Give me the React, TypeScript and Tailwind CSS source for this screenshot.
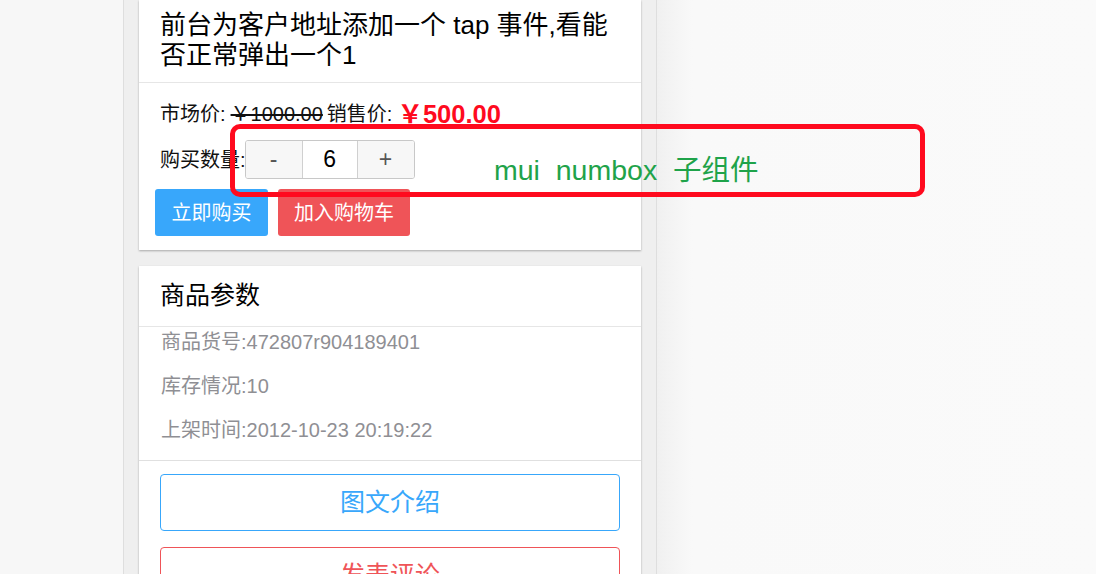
import React from "react";

const font = { fontFamily: '"Liberation Sans", "Noto Sans CJK SC", sans-serif' };

export default function App() {
  return (
    <div className="relative flex h-[574px] w-[1096px] overflow-hidden bg-[#fafafa]" style={font}>
      <div className="w-[123px] shrink-0 bg-[#f7f7f7]" />
      <div className="flex w-[534px] shrink-0 flex-col gap-[16px] border-x border-[#dedede] bg-[#efefef] px-[15px]">
        {/* card 1 */}
        <div className="bg-white shadow-[0_1px_2px_rgba(0,0,0,0.3)]">
          <div className="border-b border-[#e6e6e6] px-[21px] pb-[12px] pt-[10px] text-[26px] leading-[30px] text-black">
            前台为客户地址添加一个 tap 事件,看能
            <br />
            否正常弹出一个1
          </div>
          <div className="px-[16px] pb-[14px] pt-[16px]">
            <div className="flex h-[30px] items-center pl-[5px] text-[20px] text-[#111]">
              <span>市场价:</span>
              <span className="ml-[5px] line-through">￥1000.00</span>
              <span className="ml-[4px]">销售价:</span>
              <span className="ml-[5px] text-[25.5px] font-bold text-[#ff0a1e]">￥500.00</span>
            </div>
            <div className="mt-[11px] flex items-center pl-[5px] text-[20px] text-[#111]">
              <span>购买数量:</span>
              <div className="-ml-[1px] flex h-[39px] w-[170px] overflow-hidden rounded-[3px] border border-[#c8c8c8]">
                <div className="flex w-[57px] items-center justify-center border-r border-[#d0d0d0] bg-[#f7f7f7] text-[23px] text-[#555]">-</div>
                <div className="flex w-[54px] items-center justify-center bg-white text-[23px] text-black">6</div>
                <div className="flex w-[57px] items-center justify-center border-l border-[#d0d0d0] bg-[#f7f7f7] text-[23px] text-[#555]">+</div>
              </div>
            </div>
            <div className="mt-[10px] flex gap-[10px]">
              <div className="flex h-[47px] w-[113px] items-center justify-center rounded-[3px] bg-[#38a7fb] text-[20px] text-white">立即购买</div>
              <div className="flex h-[47px] w-[132px] items-center justify-center rounded-[3px] bg-[#ef5458] text-[20px] text-white">加入购物车</div>
            </div>
          </div>
        </div>
        {/* card 2 */}
        <div className="bg-white shadow-[0_1px_2px_rgba(0,0,0,0.3)]">
          <div className="flex h-[61px] items-center border-b border-[#e6e6e6] px-[21px] text-[25px] text-black">商品参数</div>
          <div className="flex flex-col gap-[20px] border-b border-[#e0e0e0] px-[22px] pb-[18px] pt-[3px] text-[20px] leading-[24px] text-[#8f8f94]">
            <div>商品货号:472807r904189401</div>
            <div>库存情况:10</div>
            <div>上架时间:2012-10-23 20:19:22</div>
          </div>
          <div className="flex flex-col gap-[16px] px-[21px] pb-[16px] pt-[13px]">
            <div className="flex h-[57px] items-center justify-center rounded-[4px] border border-[#38a7fb] text-[25px] text-[#38a7fb]">图文介绍</div>
            <div className="flex h-[57px] items-center justify-center rounded-[4px] border border-[#ef5458] text-[25px] text-[#ef5458]">发表评论</div>
          </div>
        </div>
      </div>
      <div className="flex-1 bg-gradient-to-r from-[#f0f0f0] via-[#f9f9f9] via-[8%] to-[#fafafa]" />

      {/* annotation overlay */}
      <div className="absolute left-[230px] top-[124px] h-[73px] w-[695px] rounded-[10px] border-[5px] border-[#ff0a1e]" />
      <div className="absolute left-[494px] top-[152px] whitespace-pre text-[28.5px] leading-[36px] text-[#1fa34a]">mui  numbox  子组件</div>
    </div>
  );
}
